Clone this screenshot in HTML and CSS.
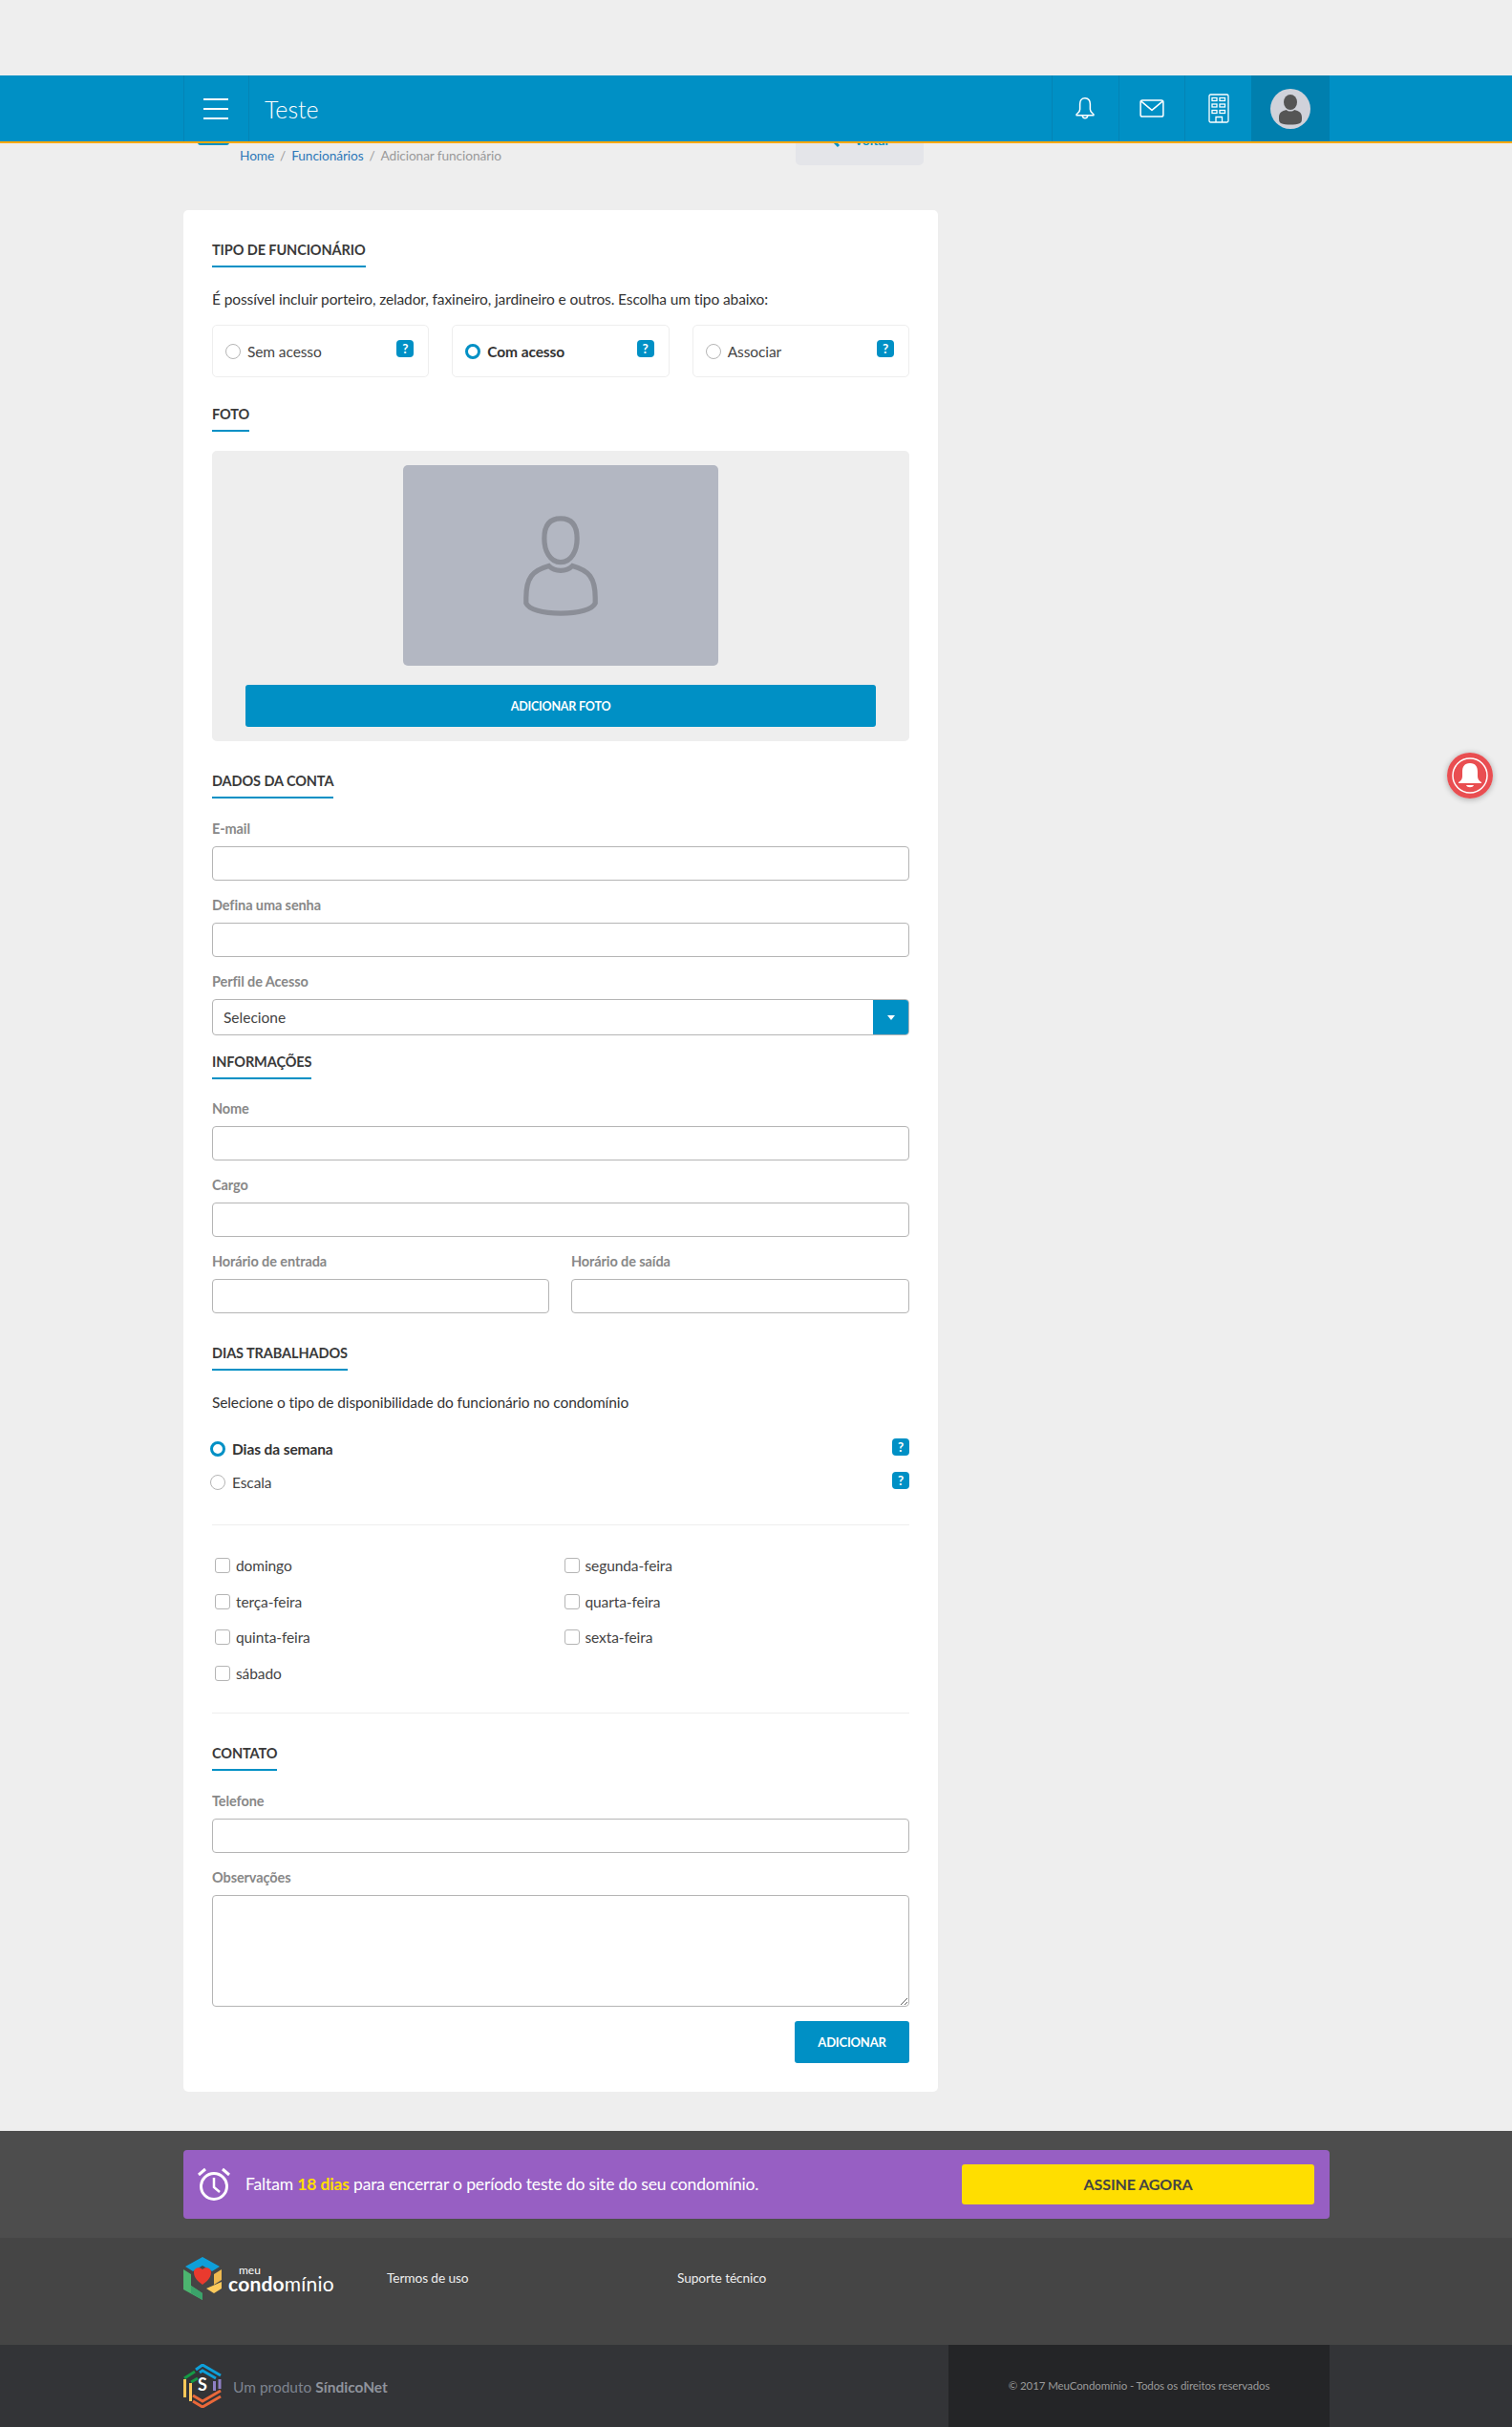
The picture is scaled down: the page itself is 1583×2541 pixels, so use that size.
FILE: index.html
```html
<!DOCTYPE html>
<html lang="pt-BR">
<head>
<meta charset="utf-8">
<title>Adicionar funcionário</title>
<link rel="stylesheet" href="styles.css">
</head>
<body>
<header class="topbar">
  <div class="wrap topbar-in">
    <button class="burger" aria-label="Menu"><span></span><span></span><span></span></button>
    <div class="brand">Teste</div>
    <div class="top-icons">
      <div class="top-cell">
        <svg width="22" height="25" viewBox="0 0 24 28" fill="none" stroke="#fff" stroke-width="1.700" stroke-linejoin="round"><path d="M12 2c-4 0-6 3-6 7v6c0 3-2 4-4 6v1h20v-1c-2-2-4-3-4-6V9c0-4-2-7-6-7z"/><path d="M9 22.500c0 4 6 4 6 0"/></svg>
      </div>
      <div class="top-cell">
        <svg width="26" height="19" viewBox="0 0 27 20" fill="none" stroke="#fff" stroke-width="1.600" stroke-linejoin="round"><rect x="1" y="1" width="25" height="18" rx="2"/><path d="M1.500 2l12 10 12-10"/></svg>
      </div>
      <div class="top-cell">
        <svg width="22" height="31" viewBox="0 0 22 31" fill="none" stroke="#fff" stroke-width="1.300"><rect x="1" y="1" width="20" height="29" rx="1.500"/><rect x="4" y="4.500" width="5" height="3"/><rect x="12" y="4.500" width="5.500" height="3"/><rect x="4" y="11" width="5" height="3"/><rect x="12" y="11" width="5.500" height="3"/><rect x="4" y="17.500" width="5" height="3"/><rect x="12" y="17.500" width="5.500" height="3"/><path d="M8 30v-5.500h6.500V30"/></svg>
      </div>
      <div class="top-cell top-user">
        <svg width="42" height="42" viewBox="0 0 42 42"><circle cx="21" cy="21" r="21" fill="#d0d2da"/><ellipse cx="21" cy="14" rx="7" ry="8" fill="#555"/><path d="M11 36c-2-1-2-3-2-6 0-5 3-7 8-8 1 2 7 2 8 0 5 1 8 3 8 8 0 3 0 5-2 6-5 2-15 2-20 0z" fill="#555"/></svg>
      </div>
    </div>
  </div>
</header>

<div class="wrap">
  <div class="page-head">
    <span class="head-stub"></span>
    <nav class="crumbs"><a>Home</a><i>/</i><a>Funcionários</a><i>/</i><b>Adicionar funcionário</b></nav>
    <a class="back-btn">
      <svg width="14" height="16" viewBox="0 0 14 16" fill="none" stroke="#0090c5" stroke-width="3"><path d="M12 2L4 8l6 6"/></svg>
      <span>Voltar</span>
    </a>
  </div>

  <main class="card">
    <h2 class="sec-title">Tipo de funcionário</h2>
    <p class="sec-text">É possível incluir porteiro, zelador, faxineiro, jardineiro e outros. Escolha um tipo abaixo:</p>
    <div class="type-grid">
      <label class="type-box"><span class="radio"></span><span class="type-label">Sem acesso</span><span class="help">?</span></label>
      <label class="type-box"><span class="radio on"></span><span class="type-label strong">Com acesso</span><span class="help">?</span></label>
      <label class="type-box"><span class="radio"></span><span class="type-label">Associar</span><span class="help">?</span></label>
    </div>

    <h2 class="sec-title mt-foto">Foto</h2>
    <div class="photo-panel">
      <div class="photo-box">
        <svg width="80" height="105" viewBox="0 0 84 110" fill="none" stroke="#8b8e97" stroke-width="5.500"><path d="M42 3c-13 0-18 9-18 22s6 26 18 26 18-13 18-26S55 3 42 3z"/><path d="M29 55c-18 5-25 13-25 35v6c3 7 18 11 38 11s35-4 38-11v-6c0-22-7-30-25-35-3 3-7 5-13 5s-10-2-13-5z"/></svg>
      </div>
      <a class="btn photo-btn">Adicionar foto</a>
    </div>

    <h2 class="sec-title mt-dados">Dados da conta</h2>
    <div class="field first"><label>E-mail</label><input type="text"></div>
    <div class="field"><label>Defina uma senha</label><input type="text"></div>
    <div class="field"><label>Perfil de Acesso</label>
      <div class="select"><span>Selecione</span><i class="select-arrow"></i></div>
    </div>

    <h2 class="sec-title mt-info">Informações</h2>
    <div class="field first"><label>Nome</label><input type="text"></div>
    <div class="field"><label>Cargo</label><input type="text"></div>
    <div class="two-col">
      <div class="field"><label>Horário de entrada</label><input type="text"></div>
      <div class="field"><label>Horário de saída</label><input type="text"></div>
    </div>

    <h2 class="sec-title mt-dias">Dias trabalhados</h2>
    <p class="sec-text">Selecione o tipo de disponibilidade do funcionário no condomínio</p>
    <div class="avail">
      <div class="avail-row"><span class="radio on"></span><span class="type-label strong">Dias da semana</span><span class="help">?</span></div>
      <div class="avail-row"><span class="radio"></span><span class="type-label">Escala</span><span class="help">?</span></div>
    </div>
    <hr class="rule rule-a">
    <div class="days">
      <label class="day"><span class="check"></span>domingo</label>
      <label class="day"><span class="check"></span>segunda-feira</label>
      <label class="day"><span class="check"></span>terça-feira</label>
      <label class="day"><span class="check"></span>quarta-feira</label>
      <label class="day"><span class="check"></span>quinta-feira</label>
      <label class="day"><span class="check"></span>sexta-feira</label>
      <label class="day"><span class="check"></span>sábado</label>
    </div>
    <hr class="rule rule-b">

    <h2 class="sec-title mt-contato">Contato</h2>
    <div class="field first"><label>Telefone</label><input type="text"></div>
    <div class="field"><label>Observações</label><textarea></textarea></div>
    <div class="actions"><a class="btn add-btn">Adicionar</a></div>
  </main>
</div>

<a class="float-bell" aria-label="Notificações">
  <svg width="48" height="48" viewBox="0 0 48 48"><circle cx="24" cy="24" r="24" fill="#e94e51"/><circle cx="24" cy="24" r="18" fill="none" stroke="#fff" stroke-width="1.500"/><path d="M24 11c-6 0-8 4-8 9v5c0 3-2 5-4 6v1h24v-1c-2-1-4-3-4-6v-5c0-5-2-9-8-9z" fill="#fff"/><path d="M20 34h8c-1 3-7 3-8 0z" fill="#fff"/></svg>
</a>

<footer>
  <section class="foot-trial">
    <div class="wrap">
      <div class="trial-box">
        <svg class="clock" width="36" height="36" viewBox="0 0 36 36" fill="none" stroke="#fff" stroke-width="3"><circle cx="18" cy="20" r="13.500"/><path d="M18 11v10l6 5" stroke-width="2.500"/><path d="M2 8l7-6M34 8l-7-6" stroke-width="3"/></svg>
        <p class="trial-text">Faltam <b>18 dias</b> para encerrar o período teste do site do seu condomínio.</p>
        <a class="trial-btn">Assine agora</a>
      </div>
    </div>
  </section>
  <section class="foot-links">
    <div class="wrap links-in">
      <div class="mc-logo">
        <svg width="40" height="45" viewBox="0 0 40 45"><path d="M20 0l18 10-8 5-10-6-10 6-8-5z" fill="#0e9fd9"/><path d="M0 13l8 5v12l12 8v7L0 34z" fill="#4cb56f"/><path d="M8 30l12 8v7l-12-7z" fill="#3ba36a"/><path d="M40 13v11l-8 5V18z" fill="#efb94f"/><path d="M40 26v7l-8 5-8-5z" fill="#fcca5c"/><path d="M20 13c3-3 9-2 9 3 0 6-5 10-9 13-4-3-9-7-9-13 0-5 6-6 9-3z" fill="#ea3a2e"/></svg>
        <div class="mc-word"><span>meu</span><strong>condo<em>mínio</em></strong></div>
      </div>
      <a class="foot-link link-a">Termos de uso</a>
      <a class="foot-link">Suporte técnico</a>
    </div>
  </section>
  <section class="foot-bottom">
    <div class="wrap bottom-in">
      <div class="sn-brand">
        <svg width="40" height="46" viewBox="0 0 40 46" fill="none" stroke-width="3"><path d="M13 6l7-5 19 11" stroke="#0e9fd9"/><path d="M17 9l3-2 14 8" stroke="#0e9fd9"/><path d="M1 15l11-7M8 19l7-4" stroke="#159a45"/><path d="M1.500 16v19M7.500 20v19" stroke="#fbc759"/><path d="M32.500 18v10M38 16v10" stroke="#8f80c5"/><path d="M10 33l10 6 19-11" stroke="#e9683a"/><path d="M10 39l10 6 19-11" stroke="#e9683a"/><text x="20" y="28" text-anchor="middle" class="sn-s">S</text></svg>
        <span class="sn-text">Um produto <b>SíndicoNet</b></span>
      </div>
      <div class="copy">© 2017 MeuCondomínio - Todos os direitos reservados</div>
    </div>
  </section>
</footer>
</body>
</html>
```
FILE: styles.css
```css
* { box-sizing: border-box; }
html, body { margin: 0; padding: 0; }
body {
  background: #eeeeee;
  font-family: "Lato", "Noto Sans", sans-serif;
  font-size: 15px;
  color: #333;
  position: relative;
  min-height: 2541px;
}
a { text-decoration: none; }
.wrap { width: 1200px; margin-left: 192px; }

.topbar {
  position: relative;
  z-index: 2;
  margin-top: 79px;
  height: 71px;
  background: #0090c5;
  border-bottom: 2px solid #ffa800;
}
.topbar-in { display: flex; height: 69px; align-items: stretch; }
.burger {
  width: 69px;
  padding: 0 20px;
  border: 0;
  border-left: 1px solid #0484b5;
  border-right: 1px solid #0484b5;
  background: none;
  display: flex;
  flex-direction: column;
  justify-content: center;
  gap: 8px;
}
.burger span { display: block; height: 2px; background: #fff; width: 26px; }
.brand { margin-left: 16px; color: #fff; font-size: 25px; font-weight: 300; line-height: 70px; }
.top-icons { margin-left: auto; display: flex; }
.top-cell {
  width: 69.670px;
  display: flex;
  align-items: center;
  justify-content: center;
  border-left: 1px solid #0484b5;
}
.top-user { width: 82px; background: #007fae; border-left: 0; }

.page-head {
  width: 790px;
  height: 90px;
  margin-top: -20px;
  padding: 0 15px;
  display: flex;
  align-items: flex-start;
}
.head-stub {
  width: 33px;
  height: 22px;
  border: 2px solid #0090c5;
  border-radius: 3px;
}
.crumbs { margin: 24px 0 0 11px; font-size: 13.700px; line-height: 18px; display: flex; letter-spacing: -0.100px; }
.crumbs a { color: #2f79b9; }
.crumbs i { color: #9a9a9a; font-style: normal; margin: 0 6px; }
.crumbs b { font-weight: 400; color: #9a9a9a; }
.back-btn {
  margin-left: auto;
  width: 134px;
  height: 43px;
  background: #e4e5e9;
  border-radius: 0 0 5px 5px;
  display: flex;
  align-items: center;
  justify-content: center;
  gap: 12px;
  padding-bottom: 10px;
  font-size: 14px;
  color: #0090c5;
  font-weight: 700;
}

.card {
  width: 790px;
  background: #fff;
  border-radius: 5px;
  padding: 32px 30px 30px;
}
.sec-title {
  display: table;
  margin: 0;
  height: 28px;
  padding-bottom: 6px;
  border-bottom: 2px solid #0090c5;
  font-size: 14.500px;
  line-height: 20px;
  font-weight: 700;
  text-transform: uppercase;
  letter-spacing: -0.100px;
  color: #3a3a3a;
}
.mt-foto { margin-top: 29px; }
.mt-dados { margin-top: 32px; }
.mt-info { margin-top: 18px; }
.mt-dias { margin-top: 32px; }
.mt-contato { margin-top: 32px; }
.sec-text { margin: 23px 0 0; font-size: 15.500px; line-height: 20px; color: #333; letter-spacing: -0.110px; }

.type-grid { margin-top: 17px; display: grid; grid-template-columns: repeat(3, 1fr); gap: 24px; }
.type-box {
  height: 55px;
  border: 1px solid #eeeeee;
  border-radius: 5px;
  padding: 0 14px 0 13px;
  display: flex;
  align-items: center;
  position: relative;
}
.radio {
  flex: none;
  width: 16px;
  height: 16px;
  border: 1px solid #b5b5b5;
  border-radius: 50%;
  background: #fff;
}
.radio.on { border: 3px solid #0090c5; }
.type-label { margin-left: 7px; font-size: 15.500px; color: #444; letter-spacing: -0.100px; }
.type-label.strong { font-weight: 700; color: #333; }
.help {
  flex: none;
  width: 18px;
  height: 18px;
  margin-left: auto;
  border-radius: 4px;
  background: #0090c5;
  color: #fff;
  font-size: 13.500px;
  line-height: 18px;
  font-weight: 700;
  text-align: center;
}
.type-box .help { margin-right: 1px; margin-top: -5px; }

.photo-panel {
  margin-top: 20px;
  height: 304px;
  background: #eeeeee;
  border-radius: 5px;
  padding: 15px 35px;
}
.photo-box {
  width: 330px;
  height: 210px;
  margin: 0 auto;
  background: #b3b7c2;
  border-radius: 5px;
  display: flex;
  align-items: center;
  justify-content: center;
}
.btn {
  display: flex;
  align-items: center;
  justify-content: center;
  background: #0090c5;
  color: #fff;
  border-radius: 3px;
  font-size: 12.500px;
  font-weight: 700;
  text-transform: uppercase;
  letter-spacing: -0.200px;
}
.photo-btn { height: 44px; margin-top: 20px; }

.field { margin-top: 17px; }
.field.first { margin-top: 23px; }
.mt-info + .field.first { margin-top: 22px; }
.field label {
  display: block;
  font-size: 14.500px;
  line-height: 18px;
  font-weight: 700;
  color: #888;
  letter-spacing: -0.100px;
  margin-bottom: 9px;
}
.field input, .field textarea {
  display: block;
  width: 100%;
  height: 36px;
  border: 1px solid #b5b5b5;
  border-radius: 4px;
  background: #fff;
  padding: 0 10px;
}
.field textarea { height: 117px; resize: both; }
.select {
  height: 38px;
  border: 1px solid #b5b5b5;
  border-radius: 4px;
  display: flex;
  align-items: center;
  padding-left: 11px;
  font-size: 15.500px;
  color: #444;
  position: relative;
  overflow: hidden;
}
.select-arrow {
  margin-left: auto;
  width: 37px;
  align-self: stretch;
  background: #0090c5;
  position: relative;
}
.select-arrow::after {
  content: "";
  position: absolute;
  left: 15px;
  top: 16px;
  border: 4px solid transparent;
  border-top: 5px solid #fff;
  border-bottom: 0;
}
.two-col { display: grid; grid-template-columns: 353px 354px; gap: 23px; }

.avail { margin-top: 21px; }
.avail-row { height: 35px; display: flex; align-items: center; margin-left: -2px; }
.avail-row .help { margin-top: -3px; }
.rule { margin: 0; border: 0; border-top: 1px solid #eeeeee; }
.rule-a { margin-top: 27px; }
.rule-b { margin-top: 22px; }
.days { margin-top: 23px; display: grid; grid-template-columns: 365.500px 1fr; grid-auto-rows: 37.700px; padding-left: 3px; }
.day { display: flex; align-items: center; font-size: 15.500px; color: #444; letter-spacing: -0.100px; }
.check {
  width: 16px;
  height: 16px;
  border: 1px solid #b5b5b5;
  border-radius: 3px;
  background: #fff;
  margin-right: 6px;
}
.actions { display: flex; justify-content: flex-end; margin-top: 15px; }
.add-btn { width: 120px; height: 44px; font-size: 13px; }

.float-bell {
  position: absolute;
  left: 1515px;
  top: 788px;
  width: 48px;
  height: 48px;
  border-radius: 50%;
  box-shadow: 0 1px 6px rgba(0,0,0,.3);
  z-index: 3;
}

footer { margin-top: 41px; }
.foot-trial { height: 112px; background: #4d4d4d; padding-top: 20px; }
.trial-box {
  height: 72px;
  background: #975fc3;
  border-radius: 4px;
  display: flex;
  align-items: center;
  padding-left: 14px;
  padding-right: 16px;
}
.clock { flex: none; }
.trial-text { margin: 0 0 0 15px; font-size: 17.500px; color: #fff; letter-spacing: -0.150px; }
.trial-text b { color: #ffde00; }
.trial-btn {
  margin-left: auto;
  width: 369px;
  height: 42px;
  background: #ffde00;
  border-radius: 3px;
  color: #444;
  font-size: 16px;
  font-weight: 700;
  text-transform: uppercase;
  display: flex;
  align-items: center;
  justify-content: center;
  letter-spacing: -0.100px;
}
.foot-links { height: 112px; background: #454545; }
.links-in { display: flex; align-items: flex-start; }
.mc-logo { display: flex; margin-top: 20px; width: 213px; }
.mc-word { margin-left: 7px; display: flex; flex-direction: column; color: #fff; }
.mc-word span { font-size: 12px; line-height: 11px; margin: 8px 0 0 11px; font-weight: 400; }
.mc-word strong { font-size: 21px; line-height: 18px; font-weight: 700; letter-spacing: 0.200px; }
.mc-word em { font-style: normal; font-weight: 400; }
.foot-link { margin-top: 33px; font-size: 13.700px; line-height: 18px; color: #eeeeee; letter-spacing: -0.100px; }
.link-a { width: 304px; }
.foot-bottom { height: 86px; background: #333437; }
.bottom-in { display: flex; height: 86px; align-items: center; justify-content: space-between; }
.sn-brand { display: flex; align-items: center; gap: 12px; }
.sn-s { font: 700 18px "Lato", sans-serif; fill: #fff; stroke: none; }
.sn-text { font-size: 15.500px; color: #7e8490; padding-top: 3px; }
.sn-text b { color: #8f939c; }
.copy {
  width: 399px;
  align-self: stretch;
  background: #242527;
  color: #9a9a9a;
  font-size: 11.500px;
  display: flex;
  align-items: center;
  justify-content: center;
  letter-spacing: -0.100px;
}
```
